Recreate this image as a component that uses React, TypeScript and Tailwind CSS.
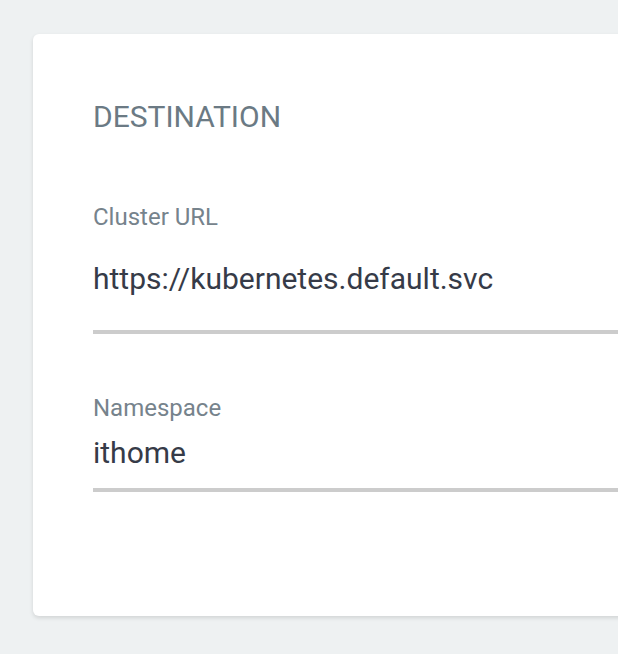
import React from 'react';

interface FieldProps {
  label: string;
  value: string;
  gapClass: string;
  padClass: string;
}

const Field = ({ label, value, gapClass, padClass }: FieldProps) => (
  <div className="flex flex-col">
    <label className="text-[24px] leading-[24px] text-[#76838c]">{label}</label>
    <div className={`${gapClass} ${padClass} border-b-4 border-[#cccccc] text-[30px] leading-[30px] text-[#363b48]`}>
      {value}
    </div>
  </div>
);

const App = () => {
  return (
    <div
      className="h-[654px] w-full overflow-hidden bg-[#eef1f2] pt-[34px] pl-[33px]"
      style={{ fontFamily: 'Roboto, "Noto Sans", sans-serif' }}
    >
      <div className="w-[720px] rounded-[6px] bg-white pt-[68px] pb-[124px] pl-[60px] shadow-[0_2px_4px_rgba(0,0,0,0.12)]">
        <h2 className="text-[30px] leading-[30px] text-[#6b7a84]">DESTINATION</h2>

        <div className="mt-[73px]">
          <Field
            label="Cluster URL"
            value="https://kubernetes.default.svc"
            gapClass="mt-[35px]"
            padClass="pb-[36px]"
          />
        </div>

        <div className="mt-[62px]">
          <Field label="Namespace" value="ithome" gapClass="mt-[18px]" padClass="pb-[20px]" />
        </div>
      </div>
    </div>
  );
};

export default App;
